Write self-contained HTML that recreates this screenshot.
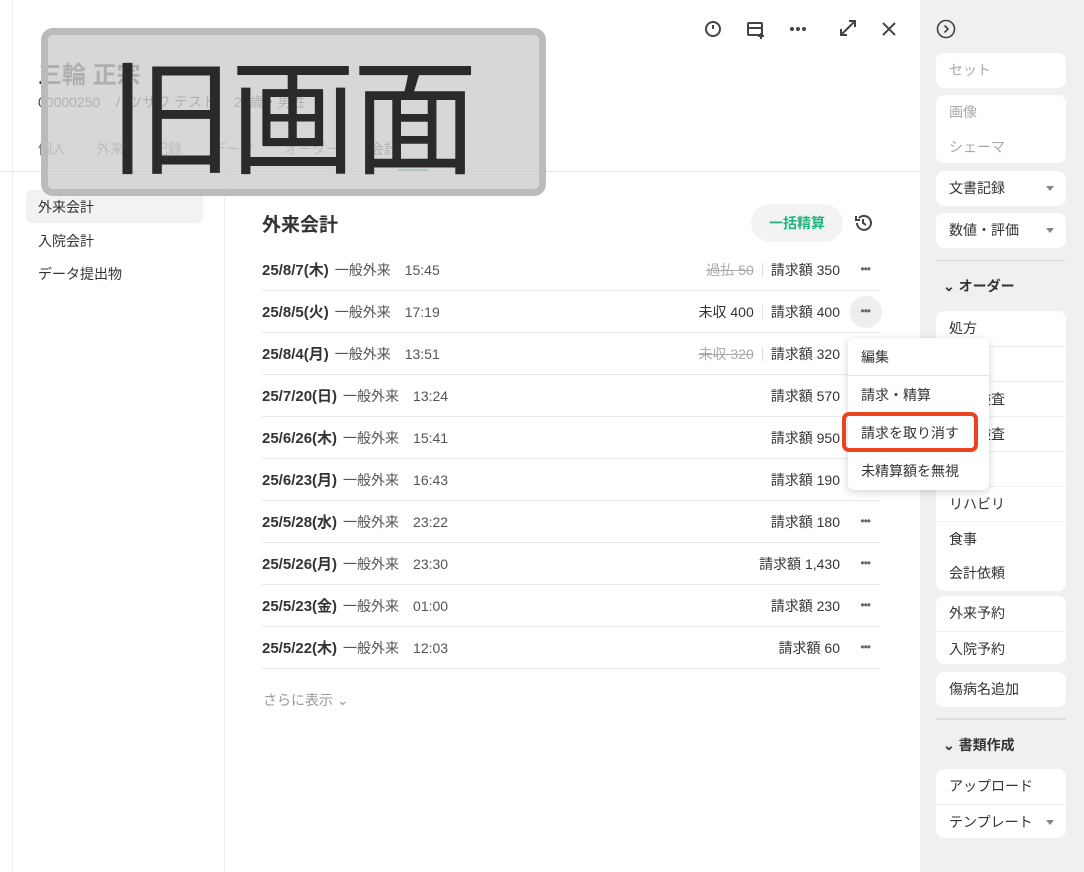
<!DOCTYPE html>
<html><head><meta charset="utf-8"><style>
*{box-sizing:border-box;margin:0;padding:0}
body{width:1084px;height:872px;position:relative;overflow:hidden;background:#fff;font-family:"Liberation Sans","Noto Sans CJK JP",sans-serif;color:#333}
.abs{position:absolute}
.side{left:920px;top:0;width:164px;height:872px;background:#f0f0f0}
.card{position:absolute;left:936px;width:130px;background:#fff;border-radius:8px}
.it{height:35px;line-height:35px;padding-left:13px;font-size:14px;color:#333;position:relative}
.row{position:absolute;left:262px;width:618px;height:42px;border-bottom:1px solid #e8e8e8;font-size:14px}
.row .d{position:absolute;left:0;top:10px;font-weight:bold;font-size:15px;color:#333}
.row .d span{font-weight:normal;font-size:14px;color:#555;margin-left:6px}
.row .r{position:absolute;right:40px;top:11px;color:#333}
.row .m{position:absolute;right:10px;top:13px;font-size:12px;color:#666;letter-spacing:-1px}
.st{color:#aaa;text-decoration:line-through}
.bar{display:inline-block;width:1px;height:14px;background:#ddd;margin:0 8px;vertical-align:-2px}
.caret{position:absolute;right:12px;top:15px;border:4px solid transparent;border-top:5px solid #888}
</style></head><body>
<div class="abs" style="left:12px;top:0;width:1px;height:872px;background:#eee"></div>
<div class="abs" style="left:38px;top:55px;font-size:24px;font-weight:bold;color:#333">三輪 正宗</div>
<div class="abs" style="left:38px;top:92px;font-size:14px;color:#444">00000250　ハツザワ テスト　 25歳・男性</div>
<div class="abs" style="left:38px;top:139px;font-size:14px;color:#777;word-spacing:0">
<span style="margin-right:30px">個人</span><span style="margin-right:30px">外来</span><span style="margin-right:30px">記録</span><span style="margin-right:30px">データ</span><span style="margin-right:30px">オーダー</span><span style="color:#333">会計</span></div>
<div class="abs" style="left:0;top:171px;width:920px;height:1px;background:#e5e5e5"></div>
<div class="abs" style="left:398px;top:169px;width:30px;height:2px;background:#2bb38a"></div>
<div class="abs" style="left:224px;top:172px;width:1px;height:700px;background:#eee"></div>
<div class="abs" style="left:26px;top:190px;width:177px;height:33px;background:#f2f2f2;border-radius:6px"></div>
<div class="abs" style="left:38px;top:197px;font-size:14px">外来会計</div>
<div class="abs" style="left:38px;top:231px;font-size:14px">入院会計</div>
<div class="abs" style="left:38px;top:264px;font-size:14px">データ提出物</div>
<svg class="abs" style="left:700px;top:18px" width="200" height="24" fill="none" stroke="#444" stroke-width="2">
<circle cx="13" cy="11" r="7"/><path d="M13 7v4"/>
<rect x="48" y="5" width="14" height="12" rx="1"/><path d="M48 10h14M61 15v6M58 18h6"/>
<circle cx="92" cy="11" r="1" fill="#444"/><circle cx="98" cy="11" r="1" fill="#444"/><circle cx="104" cy="11" r="1" fill="#444"/>
<path d="M141 17l14-14M149 3h6v6M141 11v6h6"/>
<path d="M183 5l12 12M195 5l-12 12"/>
</svg>
<div class="abs" style="left:41px;top:28px;width:505px;height:168px;background:rgba(205,205,205,0.8);border:7px solid #bbb;border-radius:12px"></div>
<div class="abs" style="left:108px;top:38px;font-size:126px;line-height:145px;color:#2a2a2a;font-family:'Noto Sans CJK JP',sans-serif;letter-spacing:-4px">旧画面</div>
<div class="abs" style="left:262px;top:210px;font-size:19px;font-weight:bold">外来会計</div>
<div class="abs" style="left:751px;top:204px;width:92px;height:38px;background:#f3f3f3;border-radius:19px;text-align:center;line-height:38px;color:#1fb57e;font-weight:bold;font-size:14px">一括精算</div>
<svg class="abs" style="left:853px;top:213px" width="20" height="20" fill="none" stroke="#444" stroke-width="2"><path d="M4 10a7 7 0 1 0 2-5M3 3v4h4M10 6v4l3 2"/></svg>
<div class="row" style="top:249px"><div class="d">25/8/7(木)<span>一般外来　15:45</span></div><div class="r"><span class="st">過払 50</span><span class="bar"></span>請求額 350</div><div class="m">•••</div></div>
<div class="row" style="top:291px"><div class="d">25/8/5(火)<span>一般外来　17:19</span></div><div class="r">未収 400<span class="bar"></span>請求額 400</div><div class="abs" style="right:-2px;top:5px;width:32px;height:32px;border-radius:16px;background:#eee"></div><div class="m">•••</div></div>
<div class="row" style="top:333px"><div class="d">25/8/4(月)<span>一般外来　13:51</span></div><div class="r"><span class="st">未収 320</span><span class="bar"></span>請求額 320</div></div>
<div class="row" style="top:375px"><div class="d">25/7/20(日)<span>一般外来　13:24</span></div><div class="r">請求額 570</div></div>
<div class="row" style="top:417px"><div class="d">25/6/26(木)<span>一般外来　15:41</span></div><div class="r">請求額 950</div></div>
<div class="row" style="top:459px"><div class="d">25/6/23(月)<span>一般外来　16:43</span></div><div class="r">請求額 190</div></div>
<div class="row" style="top:501px"><div class="d">25/5/28(水)<span>一般外来　23:22</span></div><div class="r">請求額 180</div><div class="m">•••</div></div>
<div class="row" style="top:543px"><div class="d">25/5/26(月)<span>一般外来　23:30</span></div><div class="r">請求額 1,430</div><div class="m">•••</div></div>
<div class="row" style="top:585px"><div class="d">25/5/23(金)<span>一般外来　01:00</span></div><div class="r">請求額 230</div><div class="m">•••</div></div>
<div class="row" style="top:627px"><div class="d">25/5/22(木)<span>一般外来　12:03</span></div><div class="r">請求額 60</div><div class="m">•••</div></div>
<div class="abs" style="left:263px;top:690px;font-size:14px;color:#999">さらに表示 ⌄</div>
<div class="abs side"></div>
<svg class="abs" style="left:936px;top:19px" width="20" height="20" fill="none" stroke="#444" stroke-width="1.6"><circle cx="10" cy="10" r="8.5"/><path d="M8.5 6.5l3.5 3.5-3.5 3.5"/></svg>
<div class="card" style="top:53px"><div class="it" style="color:#aaa">セット</div></div>
<div class="card" style="top:95px;height:68px"><div class="it" style="color:#aaa">画像</div><div class="it" style="color:#aaa">シェーマ</div></div>
<div class="card" style="top:171px"><div class="it">文書記録<i class="caret"></i></div></div>
<div class="card" style="top:213px"><div class="it">数値・評価<i class="caret"></i></div></div>
<div class="abs" style="left:936px;top:260px;width:130px;height:1px;background:#ddd"></div>
<div class="abs" style="left:943px;top:276px;font-size:14px;font-weight:bold">⌄ オーダー</div>
<div class="card" style="top:311px;height:280px"><div class="it">処方</div><div class="it" style="border-top:1px solid #eee">注射</div><div class="it" style="border-top:1px solid #eee">検体検査</div><div class="it" style="border-top:1px solid #eee">生理検査</div><div class="it" style="border-top:1px solid #eee">処置</div><div class="it" style="border-top:1px solid #eee">リハビリ</div><div class="it" style="border-top:1px solid #eee">食事</div><div class="it">会計依頼</div></div>
<div class="card" style="top:596px;height:68px"><div class="it">外来予約</div><div class="it" style="border-top:1px solid #eee">入院予約</div></div>
<div class="card" style="top:672px"><div class="it">傷病名追加</div></div>
<div class="abs" style="left:936px;top:718px;width:130px;height:2px;background:#ddd"></div>
<div class="abs" style="left:943px;top:735px;font-size:14px;font-weight:bold">⌄ 書類作成</div>
<div class="card" style="top:769px;height:69px"><div class="it">アップロード</div><div class="it" style="border-top:1px solid #eee">テンプレート<i class="caret" style="right:12px"></i></div></div>
<div class="abs" style="left:848px;top:338px;width:141px;height:152px;background:#fff;border-radius:6px;box-shadow:0 2px 8px rgba(0,0,0,0.18);font-size:14px">
<div style="height:38px;line-height:38px;padding-left:13px;border-bottom:1px solid #e5e5e5">編集</div>
<div style="height:38px;line-height:38px;padding-left:13px">請求・精算</div>
<div style="height:38px;line-height:38px;padding-left:13px">請求を取り消す</div>
<div style="height:38px;line-height:38px;padding-left:13px">未精算額を無視</div>
</div>
<div class="abs" style="left:842px;top:412px;width:136px;height:40px;border:4px solid #e9431f;border-radius:7px"></div>
</body></html>
